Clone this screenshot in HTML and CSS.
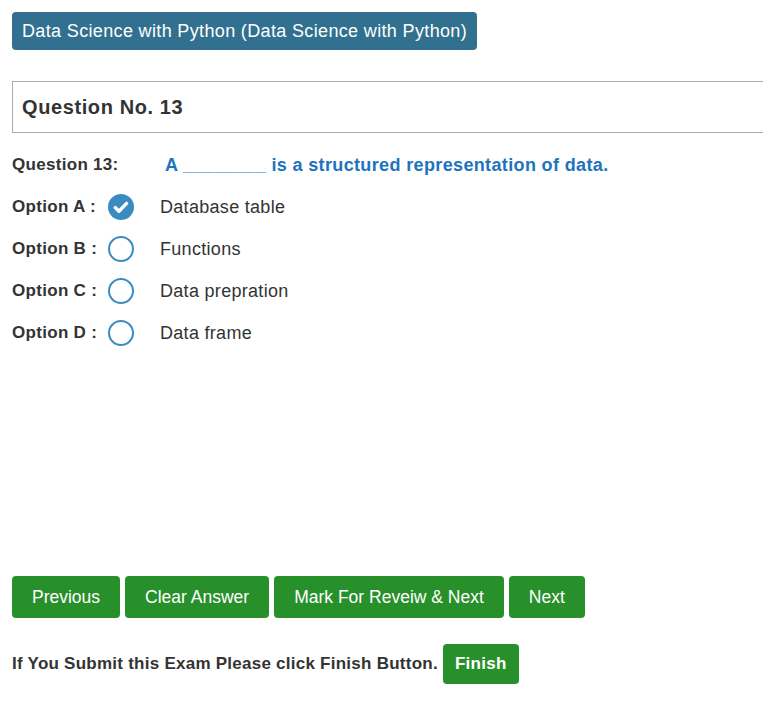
FILE: index.html
```html
<!DOCTYPE html>
<html>
<head>
<meta charset="utf-8">
<link rel="stylesheet" href="styles.css">
</head>
<body>
<div class="page">
  <div class="badge">Data Science with Python (Data Science with Python)</div>
  <div class="qbox"><h3>Question No. 13</h3></div>
  <div class="qline">
    <span class="qlabel">Question 13:</span>
    <span class="qtext">A ________ is a structured representation of data.</span>
  </div>
  <div class="opts">
    <div class="opt">
      <span class="olabel">Option A :</span>
      <span class="radio checked"><svg width="26" height="26" viewBox="0 0 26 26"><circle cx="13" cy="13" r="13" fill="#3b8bc2"/><path d="M7.2 13.6 L11 17.2 L18.6 9.4" fill="none" stroke="#fff" stroke-width="3.4" stroke-linecap="round" stroke-linejoin="round"/></svg></span>
      <span class="otext">Database table</span>
    </div>
    <div class="opt">
      <span class="olabel">Option B :</span>
      <span class="radio"><svg width="26" height="26" viewBox="0 0 26 26"><circle cx="13" cy="13" r="12" fill="none" stroke="#3b8bc2" stroke-width="2"/></svg></span>
      <span class="otext">Functions</span>
    </div>
    <div class="opt">
      <span class="olabel">Option C :</span>
      <span class="radio"><svg width="26" height="26" viewBox="0 0 26 26"><circle cx="13" cy="13" r="12" fill="none" stroke="#3b8bc2" stroke-width="2"/></svg></span>
      <span class="otext">Data prepration</span>
    </div>
    <div class="opt">
      <span class="olabel">Option D :</span>
      <span class="radio"><svg width="26" height="26" viewBox="0 0 26 26"><circle cx="13" cy="13" r="12" fill="none" stroke="#3b8bc2" stroke-width="2"/></svg></span>
      <span class="otext">Data frame</span>
    </div>
  </div>
  <div class="btns">
    <button class="btn">Previous</button>
    <button class="btn">Clear Answer</button>
    <button class="btn">Mark For Reveiw &amp; Next</button>
    <button class="btn">Next</button>
  </div>
  <div class="finish">
    <span class="ftext">If You Submit this Exam Please click Finish Button.</span>
    <button class="btn fbtn">Finish</button>
  </div>
</div>
</body>
</html>
```
FILE: styles.css
```css
html, body {
  margin: 0;
  padding: 0;
  background: #fff;
}
body {
  font-family: "Liberation Sans", Arial, sans-serif;
  color: #333;
}
.page {
  padding: 12px 0 0 12px;
  display: flex;
  flex-direction: column;
  align-items: flex-start;
}
.badge {
  background: #31708f;
  color: #fff;
  font-size: 18px;
  letter-spacing: 0.35px;
  line-height: 20px;
  padding: 9px 10px;
  border-radius: 4px;
}
.qbox {
  margin-top: 31px;
  align-self: stretch;
  height: 50px;
  border: 1px solid #aaa;
  border-right: none;
  display: flex;
  align-items: center;
}
.qbox h3 {
  margin: 0 0 0 9px;
  font-size: 20px;
  letter-spacing: 0.6px;
  font-weight: bold;
  color: #333;
}
.qline {
  margin-top: 20px;
  height: 24px;
  display: flex;
  align-items: center;
}
.qlabel {
  width: 153px;
  font-size: 17px;
  letter-spacing: 0.3px;
  font-weight: bold;
  color: #333;
}
.qtext {
  font-size: 18px;
  letter-spacing: 0.36px;
  font-weight: bold;
  color: #1e73be;
}
.opts {
  margin-top: 17px;
  display: flex;
  flex-direction: column;
  gap: 16px;
}
.opt {
  height: 26px;
  display: flex;
  align-items: center;
}
.olabel {
  width: 96px;
  font-size: 17px;
  letter-spacing: 0.3px;
  font-weight: bold;
  color: #333;
}
.radio {
  width: 26px;
  height: 26px;
  display: block;
}
.radio svg { display: block; }
.otext {
  margin-left: 26px;
  font-size: 18px;
  letter-spacing: 0.3px;
  color: #333;
}
.btns {
  margin-top: 230px;
  display: flex;
  gap: 5px;
}
.btn {
  font-family: "Liberation Sans", Arial, sans-serif;
  background: #28902b;
  color: #fff;
  border: none;
  border-radius: 4px;
  font-size: 17.5px;
  line-height: 20px;
  padding: 11px 20px;
  cursor: pointer;
}
.finish {
  margin-top: 26px;
  display: flex;
  align-items: center;
  gap: 5px;
}
.ftext {
  font-size: 17px;
  letter-spacing: 0.25px;
  font-weight: bold;
  color: #333;
}
.fbtn {
  font-weight: bold;
  font-size: 17px;
  letter-spacing: 0.3px;
  padding: 10px 12px;
}
```
